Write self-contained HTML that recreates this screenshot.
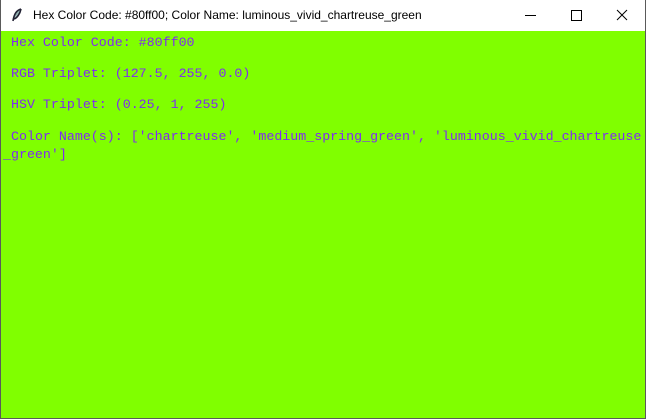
<!DOCTYPE html>
<html><head><style>
body{margin:0;width:646px;height:420px;overflow:hidden;background:#fff;position:relative;font-family:"Liberation Sans",sans-serif}
.win{position:absolute;left:0;top:0;width:644px;height:418px;border:1px solid #5a5a5a;border-top:none}
.title{position:absolute;left:0;top:0;width:646px;height:31px;background:#fff}
.title span{position:absolute;left:33px;top:8px;font-size:12px;color:#000}
.g{position:absolute;left:1px;top:31px;width:644px;height:388px;background:#80ff00}
.t{position:absolute;font-family:"Liberation Mono",monospace;font-size:13.3px;color:#7f2cf0;white-space:pre;line-height:16px}
</style></head><body>
<div class="title"><svg style="position:absolute;left:11px;top:8px" width="12" height="15" viewBox="0 0 12 15"><path d="M10 1 C6 2 3 6 2 13 M10 1 C9 6 6 10 3 11" stroke="#223" stroke-width="1.6" fill="#8aa"/></svg><span>Hex Color Code: #80ff00; Color Name: luminous_vivid_chartreuse_green</span>
<svg style="position:absolute;left:520px;top:0" width="126" height="31"><path d="M5 15.5h11" stroke="#000"/><rect x="51.5" y="10.5" width="10" height="10" fill="none" stroke="#000"/><path d="M97 10l10 10M107 10l-10 10" stroke="#000"/></svg></div>
<div class="g"></div>
<div class="win"></div>
<div class="t" style="left:11px;top:35px">Hex Color Code: #80ff00</div>
<div class="t" style="left:11px;top:66px">RGB Triplet: (127.5, 255, 0.0)</div>
<div class="t" style="left:11px;top:97px">HSV Triplet: (0.25, 1, 255)</div>
<div class="t" style="left:11px;top:129px">Color Name(s): ['chartreuse', 'medium_spring_green', 'luminous_vivid_chartreuse</div>
<div class="t" style="left:3px;top:147px">_green']</div>
</body></html>
